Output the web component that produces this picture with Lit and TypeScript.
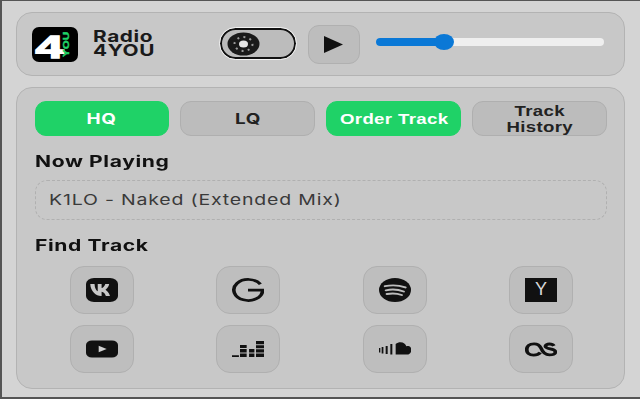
import { LitElement, html, css, svg } from "lit";
import { customElement } from "lit/decorators.js";

const icons = [
  svg`<rect x="0" y="0" width="24" height="24" rx="6" fill="#111"/><g transform="translate(0 -6) scale(1 1.5)"><path d="M3.200 8h3.200c.2 3 1.300 4.500 2.400 4.800V8h2.900v2.700c1.100-.1 2.200-1.300 2.800-2.700h2.900c-.4 1.800-1.700 3.100-2.800 3.800 1.100.6 2.700 1.900 3.400 4.200h-3.100c-.5-1.500-1.700-2.600-3.200-2.800V16h-.4C7.600 16 3.400 13 3.200 8z" fill="#c8c8c8"/></g>`,
  svg`<path d="M21.300 6.300A10.800 10.500 0 1 0 23 12.200H12" fill="none" stroke="#111" stroke-width="2.700"/>`,
  svg`<circle cx="12" cy="12" r="12" fill="#111"/><path d="M4.500 8.200C9.500 6.800 15 7.200 19.800 9.400M5.200 12.300C9.500 11.100 14.500 11.500 18.500 13.500M5.900 16C9.600 15.100 13.800 15.400 17 17" fill="none" stroke="#bdbdbd" stroke-width="1.900" stroke-linecap="round"/>`,
  svg`<rect width="24" height="24" fill="#111"/>`,
  svg`<rect x="0" y="3.500" width="24" height="17" rx="4.500" fill="#111"/><path d="M9.500 8.800v6.400l6-3.200z" fill="#d0d0d0"/>`,
  svg`<path fill="#111" d="M0 18.200h5.200V20H0zM6 8h5v3H6zM6 12h5v3.500H6zM6 16.500h5V20H6zM12.800 12h4v3.500h-4zM12.800 16.500h4V20h-4zM18 4h6v3.200h-6zM18 8.200h6v3h-6zM18 12.200h6v3.300h-6zM18 16.500h6V20h-6z"/>`,
  svg`<g fill="#111"><path d="M0 11h1v4.500H0zM2 10h1.300v6.500H2zM5 9h1.500v8H5zM8.500 7h1.500v10.500H8.500z"/><path d="M12.500 17.500V7c1-1.200 2.500-1.700 3.500-1.700 2.500 0 4 2 4.500 4 .5-.2 1-.2 1.500-.2 1.500 0 2.200 2 2.200 4 0 2.500-1.500 4.400-3 4.400z"/></g>`,
  svg`<path d="M11.500 15.500C10.300 17.300 8.500 18.200 6.500 18.200 3.200 18.200 1.300 15.800 1.300 12.500S3.200 6.800 6.800 6.800c3 0 4.300 1.700 5.200 4.300 1 3.300 2.300 6.700 6.300 6.700 2.700 0 4.500-1 4.500-2.900 0-3.700-7.500-2.300-7.500-5.700 0-1.300 1.400-2.200 3-2.200 1.800 0 2.800.7 3.400 1.800" fill="none" stroke="#111" stroke-width="2.800"/>`,
];

@customElement("app-root")
export class AppRoot extends LitElement {
  static styles = css`
    :host {
      display: block;
      width: 640px;
      height: 400px;
      overflow: hidden;
      font-family: Inter, "Liberation Sans", sans-serif;
      color: #111;
    }
    .page {
      box-sizing: border-box;
      width: 640px;
      height: 399px;
      background: #d4d4d4;
      border: solid #555;
      border-width: 1px 0 2px 2px;
      padding: 11px 15px 0 14px;
      display: flex;
      flex-direction: column;
      gap: 11px;
      filter: blur(0.45px);
    }
    .panel {
      box-sizing: border-box;
      background: #c8c8c8;
      border: 1.5px solid #b3b3b3;
      border-radius: 16px;
    }
    .head {
      height: 64px;
      display: flex;
      align-items: center;
      padding-left: 14.500px;
    }
    .logo {
      width: 46px;
      height: 35px;
      display: block;
      flex: none;
    }
    .name {
      margin-left: 15px;
      width: 127px;
      flex: none;
      font-size: 16px;
      font-weight: 700;
      line-height: 14px;
      letter-spacing: 0.45px;
      color: #1a1a1a;
      margin-top: -3px;
      transform: scaleX(1.3);
      transform-origin: left center;
    }
    .toggle {
      box-sizing: border-box;
      flex: none;
      width: 76px;
      height: 31px;
      border: 2px solid #111;
      border-radius: 16px;
      outline: 1.5px solid #f2f2f2;
      background: #bcbcbc;
      display: flex;
      align-items: center;
      padding-left: 5px;
      margin-top: -1px;
    }
    .knob { width: 33px; height: 24px; display: block; }
    .play {
      box-sizing: border-box;
      flex: none;
      width: 52px;
      height: 39px;
      margin-left: 12px;
      background: #bdbdbd;
      border: 1.5px solid #b0b0b0;
      border-radius: 11px;
      display: flex;
      align-items: center;
      justify-content: center;
    }
    .slider {
      width: 228px;
      flex: none;
      height: 8px;
      margin-left: 16px;
      margin-top: -5px;
      border-radius: 4px;
      background: #efefef;
      position: relative;
    }
    .fill {
      height: 8px;
      border-radius: 4px 0 0 4px;
      background: #0a78d6;
    }
    .thumb {
      position: absolute;
      top: -4px;
      left: 58px;
      width: 20px;
      height: 16px;
      border-radius: 50%;
      background: #0a78d6;
    }
    .main {
      height: 302px;
      padding: 12.500px 17px 0 17.500px;
    }
    .btns {
      display: grid;
      grid-template-columns: repeat(4, 1fr);
      gap: 11px;
      height: 35px;
    }
    .btn {
      box-sizing: border-box;
      height: 35px;
      border-radius: 11px;
      background: #bcbcbc;
      border: 1.5px solid #afafaf;
      display: flex;
      align-items: center;
      justify-content: center;
      text-align: center;
      font-size: 14.500px;
      font-weight: 700;
      letter-spacing: 0.5px;
      color: #222;
    }
    .btn span {
      display: inline-block;
      transform: scaleX(1.3);
    }
    .btn.on {
      background: #1fd267;
      border-color: #1fd267;
      color: #fff;
    }
    .btn.arial {
      font-family: "Liberation Sans", sans-serif;
      font-weight: 700;
      font-size: 15.500px;
      line-height: 16px;
      letter-spacing: 0.3px;
    }
    .btn.arial span { transform: scaleX(1.2) translateY(1px); }
    h3 {
      margin: 0;
      font-size: 15.500px;
      font-weight: 700;
      letter-spacing: 0.45px;
      line-height: 20px;
      color: #111;
      transform: scaleX(1.36);
      transform-origin: left center;
    }
    .np { margin-top: 16px; }
    .track {
      box-sizing: border-box;
      height: 40px;
      margin-top: 8px;
      border: 1.5px dashed #b0b0b0;
      border-radius: 12px;
      display: flex;
      align-items: center;
      padding-left: 13px;
      font-size: 15px;
      letter-spacing: 0.62px;
      color: #3a3a3a;
    }
    .track span {
      display: inline-block;
      transform: scaleX(1.3);
      transform-origin: left center;
    }
    .ft { margin-top: 16px; }
    .grid {
      display: grid;
      grid-template-columns: repeat(4, 133px);
      column-gap: 13.500px;
      row-gap: 11px;
      margin-top: 10px;
      margin-left: 0.5px;
      justify-items: center;
    }
    .ib {
      box-sizing: border-box;
      width: 64px;
      height: 48px;
      border-radius: 14px;
      background: #bebebe;
      border: 1.5px solid #b0b0b0;
      display: flex;
      align-items: center;
      justify-content: center;
      position: relative;
    }
    .ib svg { width: 32px; height: 24px; display: block; }
    .y {
      position: absolute;
      inset: 0;
      display: flex;
      align-items: center;
      justify-content: center;
      color: #d8d8d8;
      font-family: "Liberation Sans", sans-serif;
      font-size: 18px;
    }
  `;

  render() {
    return html`<div class="page">
      <div class="panel head">
        <svg class="logo" viewBox="0 0 46 35" preserveAspectRatio="none">
          <rect width="46" height="35" rx="7" fill="#000"/>
          <text x="3.500" y="31" font-family="Liberation Sans" font-weight="700" font-size="32" fill="#fff" stroke="#fff" stroke-width="1.500" textLength="28" lengthAdjust="spacingAndGlyphs">4</text>
          <text transform="translate(36.500 30) rotate(-90)" font-family="Liberation Sans" font-weight="700" font-size="9" fill="#1fd267" stroke="#1fd267" stroke-width="0.400" textLength="25" lengthAdjust="spacingAndGlyphs">YOU</text>
        </svg>
        <div class="name">Radio<br />4YOU</div>
        <div class="toggle">
          <svg class="knob" viewBox="0 0 33 24" preserveAspectRatio="none">
            <ellipse cx="16.500" cy="12" rx="16" ry="11.500" fill="#1a1a1a"/>
            <ellipse cx="16.500" cy="12" rx="4.500" ry="3.500" fill="#e6e6e6"/>
            <ellipse cx="16.500" cy="12" rx="9" ry="7" fill="none" stroke="#9a9a9a" stroke-width="2" stroke-dasharray="2 4.250"/>
          </svg>
        </div>
        <div class="play">
          <svg width="19" height="17" viewBox="0 0 19 17"><path d="M0 0L19 8.500 0 17z" fill="#111"/></svg>
        </div>
        <div class="slider"><div class="fill" style="width:64px"></div><div class="thumb"></div></div>
      </div>
      <div class="panel main">
        <div class="btns">
          <div class="btn on"><span>HQ</span></div>
          <div class="btn"><span>LQ</span></div>
          <div class="btn on arial"><span>Order Track</span></div>
          <div class="btn arial"><span>Track<br />History</span></div>
        </div>
        <h3 class="np">Now Playing</h3>
        <div class="track"><span>K1LO - Naked (Extended Mix)</span></div>
        <h3 class="ft">Find Track</h3>
        <div class="grid">
          ${icons.map(
            (ic, i) => html`<div class="ib">
              <svg viewBox="0 0 24 24" preserveAspectRatio="none">${ic}</svg>
              ${i === 3 ? html`<span class="y">Y</span>` : ""}
            </div>`
          )}
        </div>
      </div>
    </div>`;
  }
}
